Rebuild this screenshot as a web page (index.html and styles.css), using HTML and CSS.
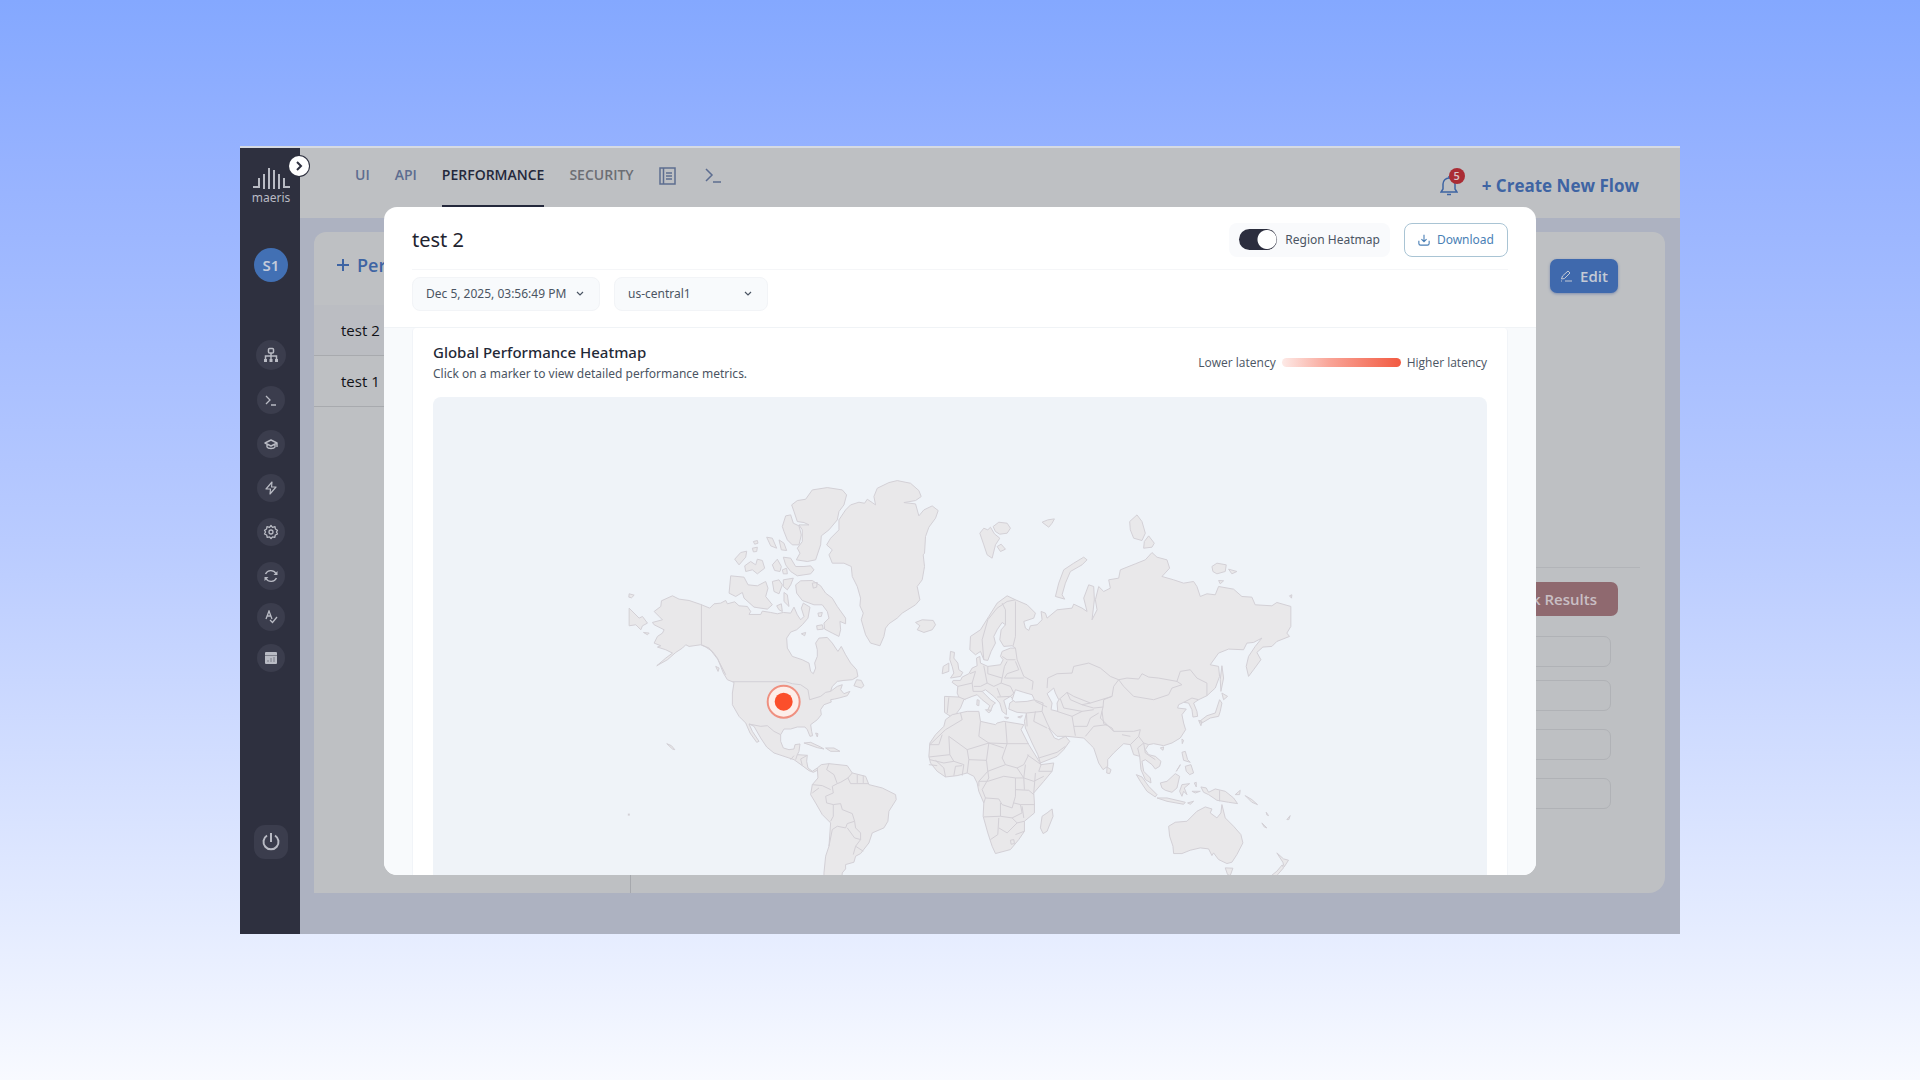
FILE: index.html
```html
<!DOCTYPE html>
<html lang="en">
<head>
<meta charset="utf-8">
<meta name="viewport" content="width=device-width, initial-scale=1">
<title>Maeris – Performance</title>
<link rel="stylesheet" href="styles.css">
</head>
<body>
<div class="window">
  <aside class="sidebar">
    <div class="logo">
      <svg width="38" height="24" viewBox="0 0 38 24" fill="none" stroke="currentColor" stroke-width="2"><path d="M1 21H7V12M12 23V8M17 23V2M22 23V4M27 23V8M32 12V21H38"/></svg>
      <span>maeris</span>
    </div>
    <button class="expand" aria-label="Expand sidebar"><svg width="12" height="12" viewBox="0 0 12 12" fill="none" stroke="currentColor" stroke-width="2"><path d="M4 2l4 4-4 4"/></svg></button>
    <div class="avatar">S1</div>
    <nav class="side-nav" aria-label="Tools">
      <div class="side-group">
        <button class="round round-lg" aria-label="Structure"><svg width="16" height="16" viewBox="0 0 16 16" fill="none" stroke="currentColor" stroke-width="1.500"><rect x="5.500" y="1.500" width="5" height="4.500" rx="1"/><path d="M8 6v8M2.500 12V9h11v3"/><path d="M1 13.500h3M6.500 13.500h3M12 13.500h3" stroke-width="3"/></svg></button>
        <button class="round" aria-label="Terminal"><svg width="14" height="14" viewBox="0 0 14 14" fill="none" stroke="currentColor" stroke-width="1.300"><path d="M2 3l4 4-4 4M7 12h5"/></svg></button>
        <button class="round" aria-label="Learning"><svg width="14" height="14" viewBox="0 0 14 14" fill="none" stroke="currentColor" stroke-width="1.400" stroke-linejoin="round"><path d="M7 3l6 3-6 3-6-3zM3 7.500V10c1 2 7 2 8 0V7.500M13 6v4"/></svg></button>
        <button class="round" aria-label="Actions"><svg width="14" height="14" viewBox="0 0 14 14" fill="none" stroke="currentColor" stroke-width="1.200" stroke-linejoin="round"><path d="M8 1L2 8h4.500L6 13l6-7H7.500z"/></svg></button>
        <button class="round" aria-label="Settings"><svg width="16" height="16" viewBox="0 0 16 16" fill="none" stroke="currentColor" stroke-width="1.300" stroke-linejoin="round"><path d="M8 1.500l1.500 1.800 2.500-.600.400 2.300 2.100 1.200-1 1.800 1 2-2.200 1-.500 2.300-2.300-.400L8 14.500l-1.500-1.600-2.300.400-.500-2.300-2.200-1 1-2-1-1.800 2.100-1.200.400-2.300 2.500.600z"/><circle cx="8" cy="8" r="2"/></svg></button>
      </div>
      <div class="side-group side-group-tight">
        <button class="round" aria-label="Sync"><svg width="16" height="16" viewBox="0 0 16 16" fill="none" stroke="currentColor" stroke-width="1.400"><path d="M2.500 6A6 6 0 0 1 13 5.500M13.500 10A6 6 0 0 1 3 10.500"/><path d="M14.500 3v4h-4zM1.500 13V9h4z" fill="currentColor" stroke="none"/></svg></button>
        <button class="round" aria-label="Checks"><svg width="14" height="14" viewBox="0 0 14 14" fill="none" stroke="currentColor" stroke-width="1.300"><path d="M2 9l3-8 3 8M3 6h4M6 10l2.500 2.500L13 7"/></svg></button>
        <button class="round" aria-label="Schedule"><svg width="14" height="14" viewBox="0 0 14 14"><path fill="currentColor" d="M2 1h10a1 1 0 0 1 1 1v10a1 1 0 0 1-1 1H2a1 1 0 0 1-1-1V2a1 1 0 0 1 1-1z"/><path stroke="#7d7f8a" d="M1 4.500h12M4 11V9M7 11V7M10 11V6"/></svg></button>
      </div>
    </nav>
    <button class="power" aria-label="Sign out"><svg width="20" height="20" viewBox="0 0 20 20" fill="none" stroke="currentColor" stroke-width="2"><path d="M10 1v9M6 3.500a7.500 7.500 0 1 0 8 0"/></svg></button>
  </aside>

  <div class="main">
    <header class="topbar">
      <nav class="tabs" aria-label="Sections">
        <a href="#ui">UI</a>
        <a href="#api">API</a>
        <a href="#performance" class="active">PERFORMANCE</a>
        <a href="#security" class="muted">SECURITY</a>
        <a href="#docs" class="icon" aria-label="Docs"><svg width="17" height="18" viewBox="0 0 17 18" fill="none" stroke="currentColor" stroke-width="1.500"><path d="M1 1h15v16H1zM4.500 1v16M7 6h6M7 9h6M7 12h6"/></svg></a>
        <a href="#console" class="icon" aria-label="Console"><svg width="16" height="16" viewBox="0 0 16 16" fill="none" stroke="currentColor" stroke-width="1.500"><path d="M1 2l6 6-6 6M8 15h8"/></svg></a>
      </nav>
      <div class="top-actions">
        <button class="bell" aria-label="Notifications"><svg width="18" height="20" viewBox="0 0 18 20" fill="none" stroke="currentColor" stroke-width="1.500"><path d="M1 16h16l-2-3V8a6 6 0 0 0-12 0v5zM9 2V0M7 18.500h4"/></svg><span class="badge">5</span></button>
        <button class="create">+ Create New Flow</button>
      </div>
    </header>
    <div class="panel">
      <div class="flows">
        <button class="add-flow"><svg width="12" height="12" viewBox="0 0 12 12" stroke="currentColor" stroke-width="2"><path d="M6 0v12M0 6h12"/></svg>Performance</button>
        <ul>
          <li class="selected">test 2</li>
          <li>test 1</li>
        </ul>
      </div>
      <div class="details">
        <button class="edit"><svg width="12" height="12" viewBox="0 0 12 12" fill="none" stroke="currentColor"><path d="M1.500 9l1-3L8 1l2 2-5.500 5.500zM5 11h7M1 11h1"/></svg>Edit</button>
        <section class="results">
          <button class="check">Check Results</button>
          <div class="fields">
            <div class="pair"><input aria-label="Users"><input aria-label="Duration"></div>
            <input aria-label="Ramp up">
            <input aria-label="Region">
          </div>
        </section>
      </div>
    </div>
  </div>

  <div class="overlay">
    <div class="modal" role="dialog" aria-labelledby="modal-title">
      <div class="modal-head">
        <div class="title-row">
          <h1 id="modal-title">test 2</h1>
          <div class="modal-actions">
            <label class="switch"><input type="checkbox" role="switch" checked>Region Heatmap</label>
            <button class="download"><svg width="12" height="12" viewBox="0 0 14 14" fill="none" stroke="currentColor" stroke-width="1.300"><path d="M7 1v8M4 6l3 3 3-3M1 8v3q0 2 2 2h8q2 0 2-2V8"/></svg>Download</button>
          </div>
        </div>
        <div class="filters">
          <div class="select select-date"><select aria-label="Run"><option>Dec 5, 2025, 03:56:49 PM</option></select><svg width="8" height="8" viewBox="0 0 8 8" fill="none" stroke="currentColor" stroke-width="1.200"><path d="M1 2l3 3 3-3"/></svg></div>
          <div class="select select-region"><select aria-label="Region"><option>us-central1</option></select><svg width="8" height="8" viewBox="0 0 8 8" fill="none" stroke="currentColor" stroke-width="1.200"><path d="M1 2l3 3 3-3"/></svg></div>
        </div>
      </div>
      <div class="modal-body">
        <section class="card">
          <div class="card-head">
            <div>
              <h2>Global Performance Heatmap</h2>
              <p>Click on a marker to view detailed performance metrics.</p>
            </div>
            <div class="legend"><span>Lower latency</span><span class="scale"></span><span>Higher latency</span></div>
          </div>
          <div class="map">
            <svg viewBox="432 397 1055 540" role="img" aria-label="World map">
              <!-- North America -->
              <g class="land" transform="translate(610 470) scale(.33333)">
                <path d="M152 393L185 378 205 388 235 392 270 404 297 415 310 402 330 400 345 392 350 402 372 396 385 408 410 410 420 425 415 434 450 434 455 424 480 428 500 432 518 428 540 430 550 412 560 435 570 450 580 440 572 415 578 400 598 412 592 445 575 465 558 480 540 487 528 505 530 535 545 560 575 570 595 580 600 605 608 612 615 595 612 580 620 560 620 540 615 520 625 505 650 503 665 520 675 535 682 545 692 530 705 555 720 580 738 600 742 620 725 630 700 632 680 635 665 650 660 665 680 650 695 645 690 660 700 672 718 665 710 678 685 685 672 688 660 690 662 697 640 705 630 720 632 735 620 750 600 765 603 785 606 798 598 800 590 780 583 772 560 772 540 778 520 778 510 795 510 815 518 835 535 840 550 838 553 825 568 823 565 845 560 855 590 857 588 875 592 895 605 905 620 895 624 900 608 908 595 903 575 888 550 870 520 860 490 850 468 832 450 805 430 770 415 763 425 785 445 815 438 818 418 790 405 760 385 740 365 705 365 670 370 638 350 630 338 610 320 565 305 545 285 532 270 525 235 530 225 525 215 535 195 548 170 570 138 588 165 565 185 550 165 540 140 532 150 528 130 520 140 500 155 490 160 480 130 465 125 458 155 450 145 440 130 425 150 410Z"/>
                <path class="border" d="M272 404V525L295 535 322 570 345 615M365 636H525L545 642 570 645 592 660 597 690 630 680 645 668 660 665M415 763L450 770 470 768 490 785 510 795M540 870L550 858M560 855L555 870M590 857L570 868 575 888"/>
                <!-- Arctic islands -->
                <path d="M543 105L560 92 585 88 605 60 650 53 695 60 708 75 700 105 685 125 680 150 655 180 632 198 630 225 615 270 590 275 557 270 568 250 560 235 575 215 575 180 565 165 595 165 580 158 560 155 550 125Z"/>
                <path d="M525 138L540 135 548 160 565 168 572 195 565 225 545 225 530 210 520 185 515 170Z"/>
                <path d="M648 225L660 205 685 180 685 150 705 120 720 105 745 97 762 100 770 88 785 98 795 105 790 80 800 55 835 38 860 32 900 40 925 62 932 80 915 92 880 98 915 102 925 138 940 120 965 108 983 122 975 145 955 172 945 200 942 250 938 255 942 290 935 330 920 350 928 390 915 405 875 430 860 445 835 462 825 475 820 500 808 528 780 520 765 495 752 450 758 430 748 408 750 385 740 350 725 320 722 290 700 280 665 280 655 255 665 240Z"/>
                <path d="M915 458L935 450 968 452 975 465 965 480 940 488 920 480 928 468Z"/>
                <path d="M360 318L400 322 412 345 440 348 465 335 472 355 465 380 485 405 470 418 430 412 400 385 395 368 375 380 355 370Z"/>
                <path d="M555 345L570 333 605 332 630 348 645 370 665 385 680 410 705 445 705 462 688 455 690 480 685 500 665 490 642 478 640 460 655 445 650 425 635 405 610 405 575 392 558 370ZM605 340L620 338 618 352 608 355Z"/>
                <path d="M372 268L390 248 408 244 405 262 385 285ZM402 288L420 275 435 285 440 268 455 272 462 295 440 312 425 300 405 305ZM468 202L485 205 498 235 480 228ZM505 210L520 220 528 242 512 240ZM485 285L500 268 512 290 508 305 492 302ZM518 262L540 265 555 290 580 290 600 288 610 300 600 312 560 318 540 305 525 285ZM515 300L528 295 530 312 518 312ZM485 335L505 330 515 345 505 372 490 365ZM518 330L548 325 540 345 530 360 518 350ZM520 368L530 375 535 410 520 395ZM428 215L440 212 442 220 432 223ZM425 235L440 232 438 245 428 246ZM498 408L512 402 515 425 505 420ZM618 468L635 465 638 478 620 480ZM572 492L585 488 582 498ZM622 430L635 428 632 440 624 440ZM55 372L70 376 62 384 54 382ZM55 415L85 445 95 440 110 460 95 468 90 480 75 465 55 468ZM98 488L115 490 110 495ZM738 630L752 632 760 648 752 655 730 648ZM315 590L325 595 322 605Z"/>
                <path d="M580 820L600 818 630 832 640 838 620 834 595 825ZM645 835L670 835 688 845 660 845ZM615 790L622 792 620 802ZM168 822L182 828 192 840 185 838Z"/>
              </g>
              <!-- South America -->
              <g class="land" transform="translate(610 660) scale(.33333)">
                <path d="M620 325L632 315 655 312 710 318 725 340 765 350 775 375 815 385 855 405 857 420 835 455 832 485 820 505 785 520 775 550 750 582 735 590 730 608 705 615 705 628 695 640 690 700 640 700 640 640 645 590 655 560 660 490 635 465 615 430 600 405 605 375 622 355Z"/>
                <path class="border" d="M655 312L648 330 670 345 680 372 665 380 668 400 645 410 648 430 668 435 668 470 660 485M605 375L635 378 660 390M605 400L625 385M725 340L712 355 690 368 680 372M712 355L720 372 775 372M740 345V370M758 348V370M668 435L690 432 695 450 725 462 732 485 710 492 705 505 680 500 665 510 655 560M732 485L735 505 750 520 750 540 732 535 710 505M750 540L735 560 728 585M735 560L758 575"/>
              </g>
              <!-- Europe and Asia -->
              <g class="land" transform="translate(900 470) scale(.33333)">
                <path d="M132 680L175 682 170 670 172 650 155 638 158 632 180 632 185 622 205 612 215 595 230 588 228 565 238 560 240 580 262 590 300 585 308 570 300 560 305 545 330 535 345 535 335 528 310 530 298 510 302 480 315 465 305 458 290 480 280 500 285 520 272 545 262 572 250 570 240 545 225 555 208 540 210 500 240 480 265 440 290 400 320 378 345 390 380 405 405 430 400 445 370 455 375 475 385 482 390 468 410 465 425 450 422 425 435 430 440 445 470 420 515 415 520 403 545 415 560 425 550 385 565 345 580 350 582 390 575 450 590 420 585 390 595 350 610 365 630 355 625 330 655 325 660 300 705 282 735 270 755 248 770 262 800 270 808 295 785 320 820 330 850 340 880 335 890 350 900 380 920 372 945 375 955 350 1000 358 1025 380 1055 382 1065 405 1115 408 1130 398 1172 410 1172 470 1160 490 1168 500 1130 515 1115 530 1088 532 1070 548 1082 570 1060 600 1045 620 1038 590 1045 560 1065 530 1085 505 1060 518 1040 520 1030 540 985 538 955 550 930 585 955 590 958 620 945 655 920 678 895 690 880 700 890 725 892 740 878 742 875 720 865 700 850 698 835 705 832 715 858 718 845 735 850 760 856 780 840 805 815 820 790 828 760 822 745 825 735 840 745 855 765 860 782 875 778 890 765 898 755 885 735 870 725 875 730 905 750 925 752 940 735 930 722 900 718 860 700 855 690 825 670 822 640 850 622 870 622 890 608 900 595 880 580 835 570 825 550 805 500 800 470 800 450 780 445 775 462 805 475 810 495 800 508 815 490 840 470 860 420 880 412 855 395 820 375 775 372 755 378 730 350 728 325 718 328 700 340 692 330 680 310 692 318 720 318 735 305 725 298 700 280 680 255 660 245 665 270 690 285 700 278 705 270 725 262 720 268 708 245 690 230 675 215 680 190 690 180 715 165 735 150 740 132 728Z"/>
                <path class="border" d="M250 570L245 510 262 450 290 415 320 395 345 390M315 465L315 420 305 400M345 395L345 500 338 528M345 535L350 570 370 620 398 635 395 660M345 570L320 570 305 560M345 575L355 600 320 612 312 625 370 625M262 590L262 612 305 625M305 625L312 590 320 575M250 588L260 640 280 650 302 640 305 625M172 650L215 640 225 605 208 612M215 640L218 665 245 665M260 640L240 650 220 650M302 640L330 650 340 670 330 680 290 682M290 655L300 680M175 682L195 690M145 683L140 730M378 730L425 725 428 700 400 690M405 695L440 712M440 655L442 625 470 612 515 610 520 590 565 580 600 595 630 620 655 630 640 650 635 680 570 700 545 690 520 680 500 668 475 690M655 630L680 625 715 628 725 612 745 622 775 625 830 635 840 605 870 600 890 625 920 640 920 678M655 630L670 650 700 680 760 690 805 675 815 655 845 645 830 635M635 680L610 690 608 712 580 715 545 705 570 700M470 725L515 740 545 725 580 720M425 725L440 760 450 780M515 740L520 770 525 798M520 770L560 770 570 745 595 730M608 712L600 745 620 765 580 770 555 800M620 765L640 785 700 785 720 780 715 800 690 825M640 785L635 775 610 762 605 725M715 800L730 820 745 825M665 795L690 800M718 860L712 835 730 820 735 850 765 870M378 730L380 770M405 725L400 755 440 775M415 865L470 848 495 830M480 688L490 715 545 725M500 668L510 690 545 705M850 698L875 685 895 690"/>
                <path class="water" d="M345 660L335 690 345 697 380 695 402 690 395 675 370 668ZM460 655L440 672 455 700 452 720 472 725 470 700 475 690 465 670Z"/>
                <path d="M150 545L162 548 160 565 172 580 175 600 187 608 180 620 150 625 160 610 155 590 148 570ZM128 590L145 580 145 605 125 612ZM238 190L250 175 262 180 270 172 282 192 298 205 285 225 275 265 260 255 250 225ZM278 170L295 157 320 160 330 175 320 190 298 193 285 185ZM290 230L302 223 315 238 300 245ZM425 157L442 150 462 147 455 160 445 172ZM465 380L475 340 490 300 520 280 550 262 560 270 545 285 510 305 495 340 485 375 493 388ZM688 155L710 135 725 155 735 190 725 212 700 205 690 180ZM732 215L745 198 762 220 755 232 730 235ZM935 290L950 280 978 285 975 305 950 312 938 305ZM985 298L1010 305 995 312ZM955 332L970 333 960 342ZM1168 378L1175 375 1174 385ZM965 588L970 625 962 665 960 630ZM965 670L982 680 970 690ZM958 690L965 700 960 725 955 740 930 745 905 760 898 755 920 738 945 730ZM895 752L905 755 902 768ZM845 808L850 812 846 822ZM255 720L272 722 265 730ZM230 690L236 692 235 708 229 706ZM312 742L325 744 318 748ZM352 742L366 738 360 745ZM780 835L790 832 788 842Z"/>
              </g>
              <!-- Africa, South-East Asia and Oceania -->
              <g class="land" transform="translate(900 640) scale(.33333)">
                <path d="M155 225L200 215 235 215 240 245 285 255 290 250 310 245 370 255 362 270 385 315 410 355 422 375 460 370 455 395 430 425 400 460 402 490 402 520 372 545 372 575 355 600 330 630 285 642 275 620 262 580 248 530 250 490 235 455 230 430 220 410 200 400 170 408 135 412 110 395 90 370 85 350 88 310 105 285 130 260 135 240Z"/>
                <path class="border" d="M180 220L185 240 135 270 88 315H115L125 285M145 290L148 345 85 352M145 290L200 330 205 360 258 362 265 310 200 330M240 245L235 290 265 310 320 312H385M315 248L320 312 305 355 315 375 350 385 370 375 385 345M265 310L310 325M258 362L262 395 235 425H262L310 410 345 415 370 415 375 375M200 400L205 360M185 408L190 375 160 365 148 345M160 408L165 380 185 378M135 412L130 385 105 362M88 360L130 370 160 365M262 395L315 375M262 395L265 415 245 450 255 475 295 478 305 495 335 505 345 470 345 415M350 385L370 415 400 425 430 410M345 450L385 452 400 465M370 415L372 450M250 490L255 475M300 490V530L250 532M300 530L335 535 365 520 360 495 340 490M295 535L292 585 270 600M295 565L320 580 350 550 335 535M350 550L372 545M345 585L372 575M360 495L402 495M330 602L340 600 342 612 332 614ZM365 500L370 535M85 375L110 378M235 425V440M380 345L422 375 415 395 455 395M405 400L400 460"/>
                <path d="M455 508L458 530 440 575 428 582 420 565 425 530 440 520ZM620 382L632 390 628 402 619 400ZM708 405L725 412 745 440 770 465 765 472 740 455 720 425ZM770 475L800 475 855 488 850 494 800 485ZM780 430L800 425 825 402 838 410 830 445 815 458 795 452 785 445ZM845 435L868 432 852 445 860 465 850 455 845 470 838 455ZM845 338L855 335 862 360 870 368 850 362ZM855 380L872 375 880 400 868 405 858 395ZM828 395L840 375 838 380ZM882 430L888 428 888 442ZM875 455L900 455 885 460ZM862 490L880 485 870 494ZM902 442L918 445 925 458 945 448 975 455 1000 475 1012 492 985 488 950 482 925 465 910 458ZM1005 465L1020 452 1018 465ZM1035 468L1055 480 1072 495 1055 488ZM1098 518L1105 528 1100 526ZM1085 550L1100 565 1092 562ZM1160 540L1170 528 1166 540Z"/>
                <path d="M825 548L860 545 890 515 915 502 935 508 930 520 950 535 962 520 965 495 975 535 1000 560 1022 585 1028 610 1010 645 995 668 980 672 955 660 940 640 935 648 925 628 900 625 870 632 845 642 820 642 818 620 808 590 805 560ZM975 685L998 686 990 708 982 705ZM1130 640L1150 658 1165 662 1152 682 1148 668ZM1146 676L1150 685 1130 708 1110 725 1105 715 1130 695Z"/>
                <path class="border" d="M958 452V485"/>
              </g>
              <g class="marker"><circle class="ring" cx="783" cy="702" r="16"/><circle class="dot" cx="783" cy="702" r="9"/></g>
              <path class="speck" d="M627 815h2"/>
            </svg>
          </div>
        </section>
      </div>
    </div>
  </div>
</div>
</body>
</html>
```
FILE: styles.css
```css
* { box-sizing: border-box; }
body {
  margin: 0;
  min-height: 100vh;
  display: flex;
  align-items: center;
  justify-content: center;
  font-family: "Noto Sans", "Open Sans", sans-serif;
  background: linear-gradient(#84a8ff, #96b2ff 15%, #b9cbff 50%, #e5ecff 86%, #f8faff);
}
h1, h2, p, ul { margin: 0; padding: 0; }
ul { list-style: none; }
a { color: inherit; text-decoration: none; }
button, input, select { font: inherit; color: inherit; border: 0; padding: 0; background: none; }
svg { display: block; flex: none; }

.window {
  position: relative;
  display: flex;
  width: 75%;
  min-height: 73vh;
  background: #adb2c1;
  border-top: 2px solid #d6dae2;
}

/* Sidebar */
.sidebar {
  position: relative;
  width: 60px;
  flex: none;
  display: flex;
  flex-direction: column;
  align-items: center;
  padding: 18px 0 75px 2px;
  background: #2e303f;
  color: #b9bbc4;
}
.logo { display: flex; flex-direction: column; align-items: center; font-size: 12px; line-height: 16px; }
.expand {
  position: absolute;
  top: 8px;
  right: -9px;
  width: 20px;
  height: 20px;
  display: grid;
  place-items: center;
  border-radius: 50%;
  background: #fff;
  color: #2e303f;
  box-shadow: 0 0 0 1px #2e303f;
}
.avatar {
  display: grid;
  place-items: center;
  width: 34px;
  height: 34px;
  margin: 42px 0 58px;
  border-radius: 50%;
  background: #4270b4;
  color: #c3cada;
  font-size: 15px;
  font-weight: 600;
}
.side-nav, .side-group { display: flex; flex-direction: column; align-items: center; gap: 16px; }
.side-group-tight { gap: 13px; }
.round { display: grid; place-items: center; width: 28px; height: 28px; border-radius: 50%; background: #3b3d4d; }
.round-lg { width: 30px; height: 30px; }
.power { display: grid; place-items: center; width: 34px; height: 34px; margin-top: auto; border-radius: 11px; background: #3b3d4d; }

/* Page behind the dialog */
.main { flex: 1; min-width: 0; display: flex; flex-direction: column; padding-bottom: 41px; font-family: "Open Sans", "Noto Sans", sans-serif; }
.topbar {
  display: flex;
  justify-content: space-between;
  height: 70px;
  padding: 0 41px 0 55px;
  background: #bec0c3;
}
.tabs { display: flex; align-items: flex-start; gap: 25px; color: #5d6d90; font-size: 14px; font-weight: 600; line-height: 20px; }
.tabs a { height: 59px; padding-top: 17px; }
.tabs .active { color: #24283b; border-bottom: 2px solid #24283b; }
.tabs .muted { color: #6c6e74; }
.tabs .icon { padding-top: 19px; }
.tabs .icon + .icon { margin-left: 4px; }
.top-actions { display: flex; align-items: center; gap: 24px; padding-top: 6px; color: #3e64a3; }
.bell { position: relative; }
.badge {
  position: absolute;
  top: -8px;
  right: -7px;
  width: 16px;
  height: 16px;
  border-radius: 50%;
  background: #aa2c34;
  color: #d9c5c9;
  font-size: 11px;
  font-weight: 600;
  line-height: 16px;
}
.create { font-size: 17px; font-weight: 700; }
.panel {
  flex: 1;
  display: flex;
  margin: 14px 15px 0 14px;
  border-radius: 12px 12px 16px 0;
  background: #bec0c3;
}
.flows { width: 317px; flex: none; border-right: 1px solid #a6a8ad; }
.add-flow { display: flex; align-items: center; gap: 8px; height: 73px; padding: 0 0 7px 23px; color: #3e64a3; font-size: 18px; font-weight: 600; }
.flows li { height: 51px; padding-left: 27px; border-bottom: 1px solid #a8aaae; color: #111217; font-size: 15px; line-height: 51px; }
.flows .selected { background: #bbbdc2; }
.details { flex: 1; display: flex; flex-direction: column; align-items: flex-end; padding: 27px 25px 0 0; }
.edit, .check { height: 34px; border-radius: 7px; color: #c4cad5; font-size: 15px; font-weight: 600; }
.edit {
  display: flex;
  align-items: center;
  justify-content: center;
  gap: 8px;
  width: 68px;
  margin-right: 22px;
  background: #3f69ad;
  box-shadow: 0 1px 3px #7d8cad;
}
.results {
  align-self: stretch;
  display: flex;
  flex-direction: column;
  align-items: flex-end;
  margin: 274px 0 0 24px;
  padding: 14px 22px 0 0;
  border-top: 1px solid #b2b4b8;
}
.check { padding: 0 21px; background: #8f696f; color: #c9bfc4; }
.fields { display: flex; flex-direction: column; gap: 18px; width: 70%; padding: 20px 7px 0 0; }
.pair { display: flex; flex-direction: column; gap: 13px; }
.fields input { width: 100%; height: 31px; border: 1px solid #b0b2b6; border-radius: 7px; }

/* Dialog */
.overlay { position: absolute; inset: 0; display: grid; place-items: center; }
.modal {
  display: flex;
  flex-direction: column;
  width: 80%;
  height: 85%;
  border-radius: 13px;
  overflow: hidden;
  background: #fff;
  color: #4b5563;
}
.modal-head { padding: 16px 28px; border-bottom: 1px solid #f0f3f6; }
.title-row { display: flex; align-items: center; justify-content: space-between; padding-bottom: 12px; border-bottom: 1px solid #f5f6f8; }
h1 { color: #1f2430; font-size: 20px; font-weight: 400; line-height: 28px; }
.modal-actions { display: flex; gap: 14px; font-size: 12px; }
.switch { display: flex; align-items: center; gap: 8px; height: 34px; padding: 0 10px; border-radius: 8px; background: #f9fafc; }
.switch input {
  appearance: none;
  width: 38px;
  height: 21px;
  margin: 0;
  border-radius: 11px;
  background: radial-gradient(circle at 28px 50%, #fff 9px, #2c2e3e 10px);
}
.download {
  display: flex;
  align-items: center;
  gap: 7px;
  height: 34px;
  padding: 0 13px;
  border: 1px solid #a9c4d4;
  border-radius: 8px;
  color: #4a7fb5;
}
.filters { display: flex; gap: 14px; padding-top: 7px; font-size: 12px; }
.select { position: relative; height: 34px; }
.select-date { width: 188px; }
.select-region { width: 154px; }
.select select { appearance: none; width: 100%; height: 100%; padding: 0 13px; border: 1px solid #f2f4f7; border-radius: 8px; background: #f8fafc; }
.select svg { position: absolute; right: 16px; top: 13px; pointer-events: none; }
.modal-body { flex: 1; min-height: 0; overflow-y: auto; scrollbar-width: none; padding: 0 28px; background: #f8fafc; }
.card { padding: 13px 20px 20px; border: 1px solid #f1f4f8; border-top: 0; border-radius: 4px 4px 12px 12px; background: #fff; }
.card-head { display: flex; align-items: center; justify-content: space-between; padding-bottom: 13px; }
h2 { color: #1f2937; font-size: 15px; font-weight: 500; line-height: 23px; }
p { font-size: 12px; line-height: 20px; }
.legend { display: flex; align-items: center; gap: 6px; font-size: 12px; }
.legend { font-family: "Open Sans", "Noto Sans", sans-serif; }
.scale { width: 119px; height: 9px; border-radius: 5px; background: linear-gradient(90deg, #fdeae7, #f9a497 40%, #f25a41); }
.map { overflow: hidden; border-radius: 8px; background: #eff3f8; }
.map svg { width: 100%; height: auto; }
.land path { fill: #e9e8ea; stroke: #d3d0d6; stroke-width: 1; stroke-linejoin: round; vector-effect: non-scaling-stroke; }
.land .border { fill: none; }
.land .water { fill: #eff3f8; }
.ring { fill: #fdeee9; stroke: #ef9080; stroke-width: 2; }
.dot { fill: #fb4f2b; }
.speck { stroke: #d3d0d6; stroke-width: 2; }
```
